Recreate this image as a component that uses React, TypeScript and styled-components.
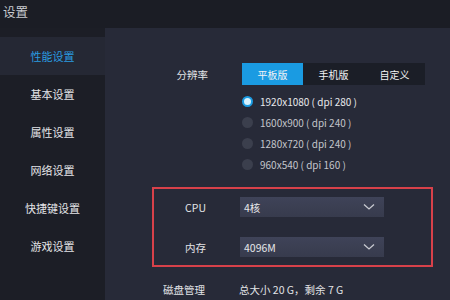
import React, { useState } from "react";
import styled, { createGlobalStyle } from "styled-components";

const GlobalStyle = createGlobalStyle`
  html, body {
    margin: 0;
    padding: 0;
    background: #1b1d25;
  }
  * {
    box-sizing: border-box;
  }
`;

const Window = styled.div`
  width: 450px;
  height: 300px;
  display: flex;
  flex-direction: column;
  background: #1b1d25;
  font-family: "Noto Sans CJK SC", "Noto Sans", sans-serif;
  overflow: hidden;
`;

const TitleBar = styled.div`
  height: 28px;
  flex-shrink: 0;
  padding: 3px 0 0 3px;
  font-size: 12.5px;
  color: #c9cbd0;
  line-height: 18px;
`;

const Body = styled.div`
  flex: 1;
  display: flex;
  min-height: 0;
`;

const Sidebar = styled.div`
  width: 105px;
  flex-shrink: 0;
  padding-top: 9px;
  display: flex;
  flex-direction: column;
  background: #1c1e26;
`;

const NavItem = styled.div<{ $active?: boolean }>`
  height: 38px;
  display: flex;
  align-items: center;
  justify-content: center;
  font-size: 11px;
  color: ${(p) => (p.$active ? "#2a9be0" : "#e4e5e8")};
  background: ${(p) => (p.$active ? "#252834" : "transparent")};
`;

const Main = styled.div`
  flex: 1;
  background: #272a38;
  padding: 35px 0 0 0;
  display: flex;
  flex-direction: column;
`;

const Row = styled.div<{ $label: number; $height: number }>`
  display: grid;
  grid-template-columns: ${(p) => p.$label}px 145px;
  column-gap: 34px;
  align-items: center;
  height: ${(p) => p.$height}px;
`;

const Label = styled.div`
  text-align: right;
  font-size: 10.5px;
  color: #e2e3e6;
`;

const Segmented = styled.div`
  display: flex;
  width: 183px;
  height: 22px;
  background: #1b1e27;
`;

const Segment = styled.div<{ $active?: boolean }>`
  flex: 1;
  display: flex;
  align-items: center;
  justify-content: center;
  font-size: 10px;
  color: #f2f3f5;
  background: ${(p) => (p.$active ? "#1a9be2" : "transparent")};
  cursor: pointer;
`;

const RadioList = styled.div`
  display: flex;
  flex-direction: column;
  padding: 6px 0 0 137px;
`;

const RadioRow = styled.div`
  height: 21px;
  display: flex;
  align-items: center;
  gap: 7px;
  cursor: pointer;
`;

const RadioDot = styled.span<{ $on?: boolean }>`
  width: 11px;
  height: 11px;
  border-radius: 50%;
  flex-shrink: 0;
  background: ${(p) => (p.$on ? "#d6f2ff" : "#3b3f4d")};
  border: ${(p) => (p.$on ? "2.5px solid #1a9be2" : "none")};
`;

const RadioText = styled.span<{ $on?: boolean }>`
  font-size: 10px;
  color: ${(p) => (p.$on ? "#e8e9ec" : "#c3c5cb")};
`;

const Highlight = styled.div`
  margin: 12px 0 0 47px;
  width: 281px;
  height: 80px;
  border: 2px solid #d8414a;
  padding-top: 8px;
  display: flex;
  flex-direction: column;
  gap: 20px;
`;

const Select = styled.div`
  height: 20px;
  width: 144px;
  background: linear-gradient(#3f4358, #373b4d);
  display: flex;
  align-items: center;
  justify-content: space-between;
  padding: 0 9px 0 4px;
  font-size: 10.5px;
  color: #e6e7ea;
`;

const Chevron = () => (
  <svg width="12" height="8" viewBox="0 0 12 8">
    <path d="M1 1.5 L6 6 L11 1.5" fill="none" stroke="#c8cad2" strokeWidth="1.3" />
  </svg>
);

const DiskRow = styled(Row)`
  margin-top: 12px;
`;

const Value = styled.div`
  font-size: 10.5px;
  color: #e2e3e6;
  white-space: nowrap;
`;

const navs = ["性能设置", "基本设置", "属性设置", "网络设置", "快捷键设置", "游戏设置"];
const modes = ["平板版", "手机版", "自定义"];
const resolutions = [
  "1920x1080 ( dpi 280 )",
  "1600x900 ( dpi 240 )",
  "1280x720 ( dpi 240 )",
  "960x540 ( dpi 160 )",
];

export default function App() {
  const [mode, setMode] = useState(0);
  const [res, setRes] = useState(0);

  return (
    <>
      <GlobalStyle />
      <Window>
        <TitleBar>设置</TitleBar>
        <Body>
          <Sidebar>
            {navs.map((n, i) => (
              <NavItem key={n} $active={i === 0}>
                {n}
              </NavItem>
            ))}
          </Sidebar>
          <Main>
            <Row $label={103} $height={22}>
              <Label>分辨率</Label>
              <Segmented>
                {modes.map((m, i) => (
                  <Segment key={m} $active={i === mode} onClick={() => setMode(i)}>
                    {m}
                  </Segment>
                ))}
              </Segmented>
            </Row>
            <RadioList>
              {resolutions.map((r, i) => (
                <RadioRow key={r} onClick={() => setRes(i)}>
                  <RadioDot $on={i === res} />
                  <RadioText $on={i === res}>{r}</RadioText>
                </RadioRow>
              ))}
            </RadioList>
            <Highlight>
              <Row $label={52} $height={20}>
                <Label>CPU</Label>
                <Select>
                  <span>4核</span>
                  <Chevron />
                </Select>
              </Row>
              <Row $label={52} $height={20}>
                <Label>内存</Label>
                <Select>
                  <span>4096M</span>
                  <Chevron />
                </Select>
              </Row>
            </Highlight>
            <DiskRow $label={100} $height={20}>
              <Label>磁盘管理</Label>
              <Value>总大小 20 G，剩余 7 G</Value>
            </DiskRow>
          </Main>
        </Body>
      </Window>
    </>
  );
}
